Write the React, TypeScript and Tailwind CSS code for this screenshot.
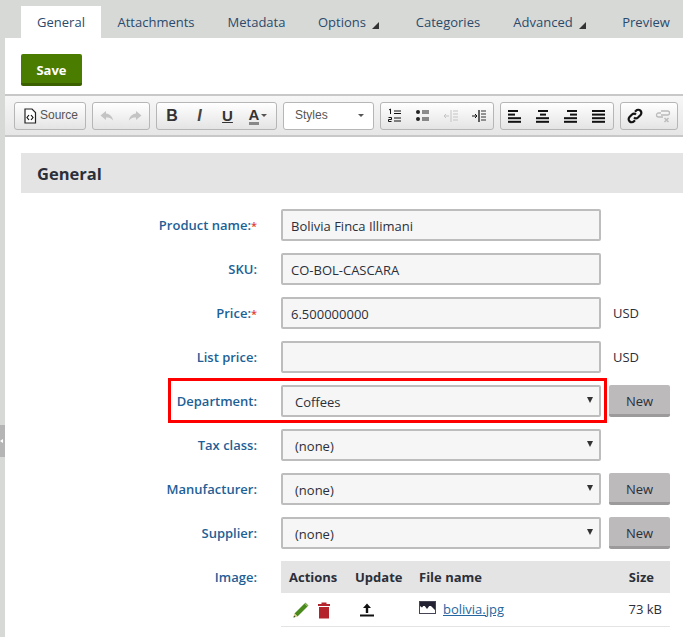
import React from "react";

const Group: React.FC<{ className?: string; children: React.ReactNode }> = ({ className = "", children }) => (
    <div className={`flex h-[28px] items-center rounded-[3px] border border-[#b6b6b6] bg-gradient-to-b from-white to-[#e4e4e4] ${className}`}>
        {children}
    </div>
);

const Ico: React.FC<{ children: React.ReactNode; w?: string }> = ({ children, w = "w-[28px]" }) => (
    <span className={`flex h-full items-center justify-center ${w}`}>
        <svg width="16" height="16" viewBox="0 0 16 16">{children}</svg>
    </span>
);

const Lines: React.FC<{ rows: [number, number][]; color?: string }> = ({ rows, color = "#111" }) => (
    <>
        {rows.map(([x, w], i) => (
            <rect key={i} x={x} y={2 + i * 3.6} width={w} height="2" fill={color} />
        ))}
    </>
);

const Toolbar: React.FC = () => (
    <div className="flex h-[43px] items-center border-y-2 border-[#c8c8c8] bg-gradient-to-b from-[#f7f7f7] to-[#e6e6e6] pl-[9px] font-['Liberation_Sans',sans-serif]">
        <Group className="w-[72px] pl-[8px]">
            <svg width="14" height="16" viewBox="0 0 14 16">
                <path d="M2 1h7l3.500 3.500V15H2z" fill="#fff" stroke="#222" strokeWidth="1.2" />
                <path d="M6 7L4 9.500l2 2.500M8 7l2 2.500L8 12" fill="none" stroke="#111" strokeWidth="1.2" />
            </svg>
            <span className="ml-[3px] pb-[1px] text-[12px] text-[#555]">Source</span>
        </Group>
        <Group className="ml-[6px] w-[58px] justify-center">
            <Ico>
                <path d="M7 3L1.500 7.500 7 12V9.500c3 0 5 .5 7 3-.5-4-3-6.500-7-7z" fill="#c4c4c4" />
            </Ico>
            <Ico>
                <path d="M9 3l5.500 4.500L9 12V9.500c-3 0-5 .5-7 3 .5-4 3-6.500 7-7z" fill="#c4c4c4" />
            </Ico>
        </Group>
        <Group className="ml-[6px] w-[121px] px-[1px]">
            <span className="flex w-[28px] justify-center text-[16px] font-bold leading-none text-[#333]">B</span>
            <span className="flex w-[27px] justify-center text-[16px] font-bold italic leading-none text-[#444]">I</span>
            <span className="flex w-[29px] justify-center text-[15px] font-bold leading-none text-[#333] underline">U</span>
            <span className="flex w-[32px] items-center justify-center">
                <span className="border-b-[3px] border-[#888] text-[15px] font-bold leading-[15px] text-[#333]">A</span>
                <span className="ml-[2px] h-0 w-0 border-x-[3px] border-t-[3px] border-x-transparent border-t-[#555]" />
            </span>
        </Group>
        <Group className="ml-[6px] w-[91px] justify-between bg-none bg-white pl-[11px] pr-[9px]">
            <span className="pb-[1px] text-[12px] text-[#555]">Styles</span>
            <span className="h-0 w-0 border-x-[3px] border-t-[3px] border-x-transparent border-t-[#555]" />
        </Group>
        <Group className="ml-[6px] w-[114px]">
            <Ico>
                <path d="M2 2l1.500-1v5M1.500 9.500h3v2h-3v2h3" fill="none" stroke="#111" />
                <path d="M7 3h7M7 5.500h7M7 10h7M7 13h7" stroke="#111" />
            </Ico>
            <Ico>
                <circle cx="3" cy="4" r="2" fill="#222" />
                <circle cx="3" cy="11" r="2" fill="#222" />
                <path d="M7 3h7M7 5h7M7 10h7M7 12h7" stroke="#222" />
            </Ico>
            <Ico>
                <path d="M8 2v12M10 3h5M10 6h5M10 9h5M10 12h5" stroke="#c4c4c4" />
                <path d="M1 8h5M3 6L1 8l2 2" fill="none" stroke="#c4c4c4" />
            </Ico>
            <Ico>
                <path d="M8 2v12" stroke="#111" strokeWidth="1.300" />
                <path d="M10 3h5M10 6h5M10 9h5M10 12h5" stroke="#333" />
                <path d="M1 8h5M4 6l2 2-2 2" fill="none" stroke="#111" />
            </Ico>
        </Group>
        <Group className="ml-[6px] w-[114px]">
            <Ico><Lines rows={[[1, 10], [1, 7], [1, 13], [1, 13]]} /></Ico>
            <Ico><Lines rows={[[3, 10], [5, 6], [1, 13], [1, 13]]} /></Ico>
            <Ico><Lines rows={[[4, 10], [7, 7], [1, 13], [1, 13]]} /></Ico>
            <Ico><Lines rows={[[1, 13], [1, 13], [1, 13], [1, 13]]} /></Ico>
        </Group>
        <Group className="ml-[6px] w-[58px]">
            <Ico>
                <path d="M7 9.500a3 3 0 0 0 4 0l2.500-2.500a3 3 0 0 0-4.500-4.300L8 3.700M9 6.500a3 3 0 0 0-4 0L2.500 9a3 3 0 0 0 4.500 4.300l1-1" fill="none" stroke="#111" strokeWidth="2.200" />
            </Ico>
            <Ico>
                <path d="M6 5H3.500a2 2 0 0 0 0 4H8M6 7h6.500a2 2 0 0 0 0-4H6" fill="none" stroke="#bbb" strokeWidth="1.300" />
                <path d="M9.500 10l4 4M13.500 10l-4 4" stroke="#bbb" strokeWidth="1.500" />
            </Ico>
        </Group>
    </div>
);

const Row: React.FC<{ label: string; req?: boolean; children: React.ReactNode; right?: React.ReactNode }> = ({ label, req, children, right }) => (
    <div className="flex h-[32px] items-center">
        <div className="w-[252px] pt-[2px] text-right text-[13px] font-semibold text-[#1e5f96]">
            {label}:{req && <span className="text-[11px] text-[#e0403a]">*</span>}
        </div>
        <div className="ml-[24px] w-[320px]">{children}</div>
        {right}
    </div>
);

const Input: React.FC<{ value?: string }> = ({ value = "" }) => (
    <div className="flex h-[32px] items-center rounded-[2px] border-2 border-[#bdbdbd] bg-[#f6f6f6] pl-[8px] pt-[4px] text-[13px] text-[#2b2f3a]">
        {value}
    </div>
);

const Select: React.FC<{ value: string }> = ({ value }) => (
    <div className="flex h-[32px] items-center justify-between rounded-[2px] border-2 border-[#bdbdbd] bg-[#f6f6f6] pl-[12px] pr-[6px] text-[13px] text-[#2b2f3a]">
        <span className="pt-[4px]">{value}</span>
        <span className="mb-[2px] h-0 w-0 border-x-[3px] border-t-[6px] border-x-transparent border-t-[#333]" />
    </div>
);

const New: React.FC = () => (
    <div className="ml-[8px] flex h-[32px] w-[61px] items-center justify-center rounded-[2px] border-b-[3px] border-[#9c9a9a] bg-[#bcbaba] pt-[4px] text-[13px] font-medium text-[#2b2f3a]">
        New
    </div>
);

const Usd: React.FC = () => <span className="ml-[12px] pt-[2px] text-[13px] text-[#2b2f3a]">USD</span>;

const tabs = [
    { name: "General", w: "w-[80px]", on: true },
    { name: "Attachments", w: "w-[110px]" },
    { name: "Metadata", w: "w-[91px]" },
    { name: "Options", w: "w-[93px]", arrow: true },
    { name: "Categories", w: "w-[106px]" },
    { name: "Advanced", w: "w-[97px]", arrow: true },
    { name: "Preview", w: "w-[96px]" },
];

const App: React.FC = () => {
    return (
        <div className="relative h-[637px] w-[683px] overflow-hidden bg-[#d7d9d7] pl-[5px] font-['Open_Sans',sans-serif]">
            <div className="absolute left-0 top-[425px] flex h-[32px] w-[5px] items-center bg-[#b5b5b5]">
                <span className="h-0 w-0 border-y-[2px] border-r-[3px] border-y-transparent border-r-white" />
            </div>

            <div className="flex h-[38px] pl-[16px] pt-[6px]">
                {tabs.map((t) => (
                    <div
                        key={t.name}
                        className={`flex h-[32px] shrink-0 items-center justify-center pt-[2px] text-[13px] text-[#2b4a6b] ${t.w} ${t.on ? "bg-white" : ""}`}
                    >
                        {t.name}
                        {t.arrow && (
                            <span className="ml-[6px] mt-[5px] h-0 w-0 border-b-[7px] border-l-[7px] border-b-[#333] border-l-transparent" />
                        )}
                    </div>
                ))}
            </div>

            <div className="h-[599px] bg-white">
                <div className="px-[16px] pt-[16px]">
                    <div className="flex h-[32px] w-[61px] items-center justify-center rounded-[2px] border-b-[3px] border-[#3a6000] bg-[#4a7c00] pt-[4px] text-[13px] font-bold text-white">
                        Save
                    </div>
                </div>
                <div className="mt-[8px]">
                    <Toolbar />
                </div>

                <div className="ml-[16px] mt-[16px] flex h-[40px] items-center bg-[#e4e4e4] pl-[16px] pt-[2px] text-[16.5px] font-bold text-[#2b2f3a]">
                    General
                </div>

                <div className="mt-[16px] flex flex-col gap-[12px]">
                    <Row label="Product name" req><Input value="Bolivia Finca Illimani" /></Row>
                    <Row label="SKU"><Input value="CO-BOL-CASCARA" /></Row>
                    <Row label="Price" req right={<Usd />}><Input value="6.500000000" /></Row>
                    <Row label="List price" right={<Usd />}><Input /></Row>
                    <Row label="Department" right={<New />}><Select value="Coffees" /></Row>
                    <Row label="Tax class"><Select value="(none)" /></Row>
                    <Row label="Manufacturer" right={<New />}><Select value="(none)" /></Row>
                    <Row label="Supplier" right={<New />}><Select value="(none)" /></Row>

                    <div className="flex">
                        <div className="w-[252px] pt-[7px] text-right text-[13px] font-semibold text-[#1e5f96]">Image:</div>
                        <div className="ml-[24px] w-[389px]">
                            <div className="flex h-[32px] items-center bg-[#e4e4e4] pt-[1px] text-[13px] font-bold text-[#2b2f3a]">
                                <span className="w-[74px] pl-[8px]">Actions</span>
                                <span className="w-[64px]">Update</span>
                                <span className="flex-1">File name</span>
                                <span className="pr-[16px]">Size</span>
                            </div>
                            <div className="flex h-[34px] items-center border-b border-[#e4e4e4] text-[13px] text-[#2b2f3a]">
                                <span className="flex w-[74px] items-center pl-[11px]">
                                    <svg width="18" height="18" viewBox="0 0 18 18">
                                        <path d="M2.500 12.500L12.500 2.500l3 3-10 10z" fill="#4a8a1c" />
                                        <path d="M13 2l3 3" stroke="#7fae50" strokeWidth="1.500" />
                                        <path d="M2.500 12.500l-1 4 4-1z" fill="#d9c98a" />
                                        <path d="M1.500 16.500l.5-2 1.500 1.500z" fill="#2a4a10" />
                                    </svg>
                                    <svg width="14" height="18" viewBox="0 0 14 18" className="ml-[7px]">
                                        <path d="M1 3h12v2H1zM4.500 1.500h5V3h-5z" fill="#b3242c" />
                                        <path d="M2 6h10v11.500H2z" fill="#b3242c" />
                                    </svg>
                                </span>
                                <span className="w-[64px] pl-[4px]">
                                    <svg width="16" height="16" viewBox="0 0 16 16">
                                        <path d="M8 1.500L4 6h2.800v5h2.400V6H12zM1 12.500h14v2H1z" fill="#111" />
                                    </svg>
                                </span>
                                <span className="flex flex-1 items-center">
                                    <svg width="17" height="14" viewBox="0 0 17 14" className="mb-[4px]">
                                        <rect x="0.500" y="0.500" width="16" height="12" fill="#fff" stroke="#445" />
                                        <rect x="1" y="1" width="15" height="4" fill="#223" />
                                        <path d="M1 5l2 1.500L5 4l3 4 3-4 5 5V1H1z" fill="#223" />
                                    </svg>
                                    <span className="ml-[7px] text-[#2467a0] underline">bolivia.jpg</span>
                                </span>
                                <span className="pr-[8px]">73 kB</span>
                            </div>
                        </div>
                    </div>
                </div>
            </div>

            <div className="absolute left-[168px] top-[378px] h-[45px] w-[439px] border-[3px] border-[#ff0000]" />
        </div>
    );
};

export default App;
